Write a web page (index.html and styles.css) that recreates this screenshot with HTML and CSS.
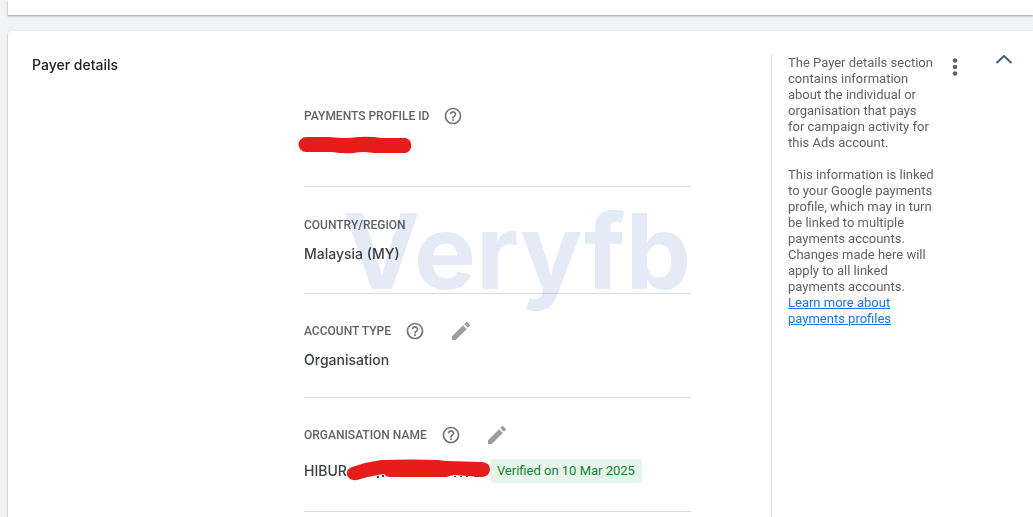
FILE: index.html
```
<!DOCTYPE html>
<html lang="en">
<head>
  <meta charset="UTF-8">
  <meta name="viewport" content="width=device-width, initial-scale=1.0">
  <title>Payer details</title>
  <link rel="stylesheet" href="styles.css">
</head>
<body>
  <svg class="defs" aria-hidden="true">
    <symbol id="help" viewBox="0 0 24 24">
      <path d="M11 18h2v-2h-2v2zm1-16C6.48 2 2 6.48 2 12s4.48 10 10 10 10-4.48 10-10S17.520 2 12 2zm0 18c-4.410 0-8-3.590-8-8s3.590-8 8-8 8 3.590 8 8-3.590 8-8 8zm0-14c-2.210 0-4 1.790-4 4h2c0-1.100.9-2 2-2s2 .9 2 2c0 2-3 1.750-3 5h2c0-2.250 3-2.500 3-5 0-2.210-1.790-4-4-4z"/>
    </symbol>
    <symbol id="pencil" viewBox="0 0 24 24">
      <path d="M3 17.250V21h3.750L17.810 9.940l-3.750-3.750L3 17.250zM20.710 7.040c.39-.39.39-1.020 0-1.410l-2.340-2.340c-.39-.39-1.020-.39-1.410 0l-1.830 1.830 3.750 3.750 1.830-1.830z"/>
    </symbol>
  </svg>

  <section class="card card-prev"></section>

  <section class="card payer">
    <h2 class="title">Payer details</h2>

    <div class="fields">
      <div class="field">
        <div class="label-row">
          <span class="label">Payments profile ID</span>
          <button type="button" class="help" aria-label="Help"><svg><use href="#help"/></svg></button>
        </div>
        <div class="value">
          <svg class="redact-id" viewBox="0 0 116 18" aria-hidden="true">
            <path d="M8 1H31Q48 3 60 1Q72 0 84 2H108A8 8 0 0 1 108 17H76Q64 15 56 17Q46 18 34 16H8A7.500 7.500 0 0 1 8 1Z"/>
          </svg>
        </div>
      </div>

      <div class="field">
        <div class="label-row">
          <span class="label">Country/region</span>
        </div>
        <div class="value">Malaysia (MY)</div>
        <div class="watermark">Veryfb</div>
      </div>

      <div class="field field-type">
        <div class="label-row">
          <span class="label">Account type</span>
          <button type="button" class="help" aria-label="Help"><svg><use href="#help"/></svg></button>
          <button type="button" class="edit" aria-label="Edit account type"><svg><use href="#pencil"/></svg></button>
        </div>
        <div class="value">Organisation</div>
      </div>

      <div class="field field-name">
        <div class="label-row">
          <span class="label">Organisation name</span>
          <button type="button" class="help" aria-label="Help"><svg><use href="#help"/></svg></button>
          <button type="button" class="edit" aria-label="Edit organisation name"><svg><use href="#pencil"/></svg></button>
        </div>
        <div class="value">
          <span>HIBUR</span>
          <svg class="redact-name" viewBox="0 0 144 24" aria-hidden="true">
            <path class="remnant" d="M32 17v2M37 16v2M109 17v1M115 17v1M121 17v1M128 17h5"/>
            <path d="M6 8Q20 3 35 1Q66 0 92 1L100 2L136 3Q144 4 144 10Q144 17 136 18L108 16Q103 17 101 18H44Q40 18 38 15Q24 17 11 21Q3 22 1 16Q0 10 6 8Z"/>
          </svg>
          <span class="badge">Verified on 10 Mar 2025</span>
        </div>
      </div>
    </div>

    <aside class="side">
      <div class="info">
        <p>The Payer details section contains information about the individual or organisation that pays for campaign activity for this Ads account.</p>
        <p>This information is linked to your Google payments profile, which may in turn be linked to multiple payments accounts. Changes made here will apply to all linked payments accounts. <a href="#">Learn more about payments profiles</a></p>
      </div>
      <button type="button" class="menu" aria-label="More options">
        <svg viewBox="0 0 24 24"><circle cx="12" cy="5.500" r="2.300"/><circle cx="12" cy="12" r="2.300"/><circle cx="12" cy="18.500" r="2.300"/></svg>
      </button>
      <button type="button" class="collapse" aria-label="Collapse">
        <svg viewBox="0 0 24 24"><path d="M4.500 8L12 1L19.500 8"/></svg>
      </button>
    </aside>
  </section>
</body>
</html>
```
FILE: styles.css
```
* {
  box-sizing: border-box;
}
body {
  margin: 0;
  padding-left: 8px;
  background: #f1f3f4;
  color: #3c4043;
  font-family: Roboto, sans-serif;
  overflow: hidden;
}
.defs {
  display: none;
}
.card {
  background: #fff;
  box-shadow: 0 1px 2px rgba(60, 64, 67, .5);
}
.card-prev {
  height: 15px;
  margin-bottom: 16px;
}
.payer {
  display: grid;
  grid-template-columns: 272px 1fr 262px;
  min-height: calc(100vh - 31px);
  padding: 24px 0 24px 24px;
  border-radius: 4px 0 0 4px;
}
.title {
  margin: 0;
  font: 500 14px/20px Inter, sans-serif;
  color: #202124;
}
.fields {
  padding: 24px 80px 24px 0;
}
.field {
  position: relative;
  padding: 26px 0 27px;
  border-bottom: 1px solid #dadce0;
}
.field:first-child {
  padding: 25px 0 29px;
}
.label-row {
  display: flex;
  align-items: center;
  height: 24px;
  margin-bottom: 5px;
}
.label {
  font-size: 12px;
  font-weight: 500;
  color: #5f6368;
  text-transform: uppercase;
}
.value {
  display: flex;
  align-items: center;
  height: 24px;
  font: 500 14px/24px Inter, sans-serif;
}
.field.field-type {
  padding: 25px 0;
}
.field.field-name {
  padding: 25px 0 28px;
}
.field-name .label-row {
  margin-bottom: 12px;
}
button {
  padding: 0;
  border: 0;
  background: none;
  cursor: pointer;
}
button svg {
  display: block;
  width: 100%;
  height: 100%;
}
.help {
  width: 20px;
  height: 20px;
  margin-left: 14px;
  fill: #757575;
}
.edit {
  width: 24px;
  height: 24px;
  margin-left: 24px;
  fill: #9e9e9e;
}
.redact-id,
.redact-name {
  flex: none;
  fill: #e71d1c;
}
.redact-id {
  width: 116px;
  height: 18px;
  margin-left: -6px;
}
.redact-name {
  width: 144px;
  height: 24px;
  margin-left: -1px;
}
.remnant {
  stroke: #3c4043;
  stroke-width: 2;
}
.badge {
  padding: 0 7px;
  border-radius: 4px;
  background: #e6f4ea;
  color: #188038;
  font: 400 13px/24px Roboto, sans-serif;
  white-space: nowrap;
}
.watermark {
  position: absolute;
  top: 1px;
  right: 0;
  color: #e4eaf6;
  font: 700 104px/126px Inter, sans-serif;
  mix-blend-mode: multiply;
  pointer-events: none;
}
.side {
  display: flex;
  align-items: flex-start;
  margin-bottom: -24px;
  padding-left: 16px;
  border-left: 1px solid #dadce0;
}
.info {
  width: 146px;
  font-size: 13px;
  line-height: 16px;
  color: #5f6368;
}
.info p {
  margin: 0 0 16px;
}
.info a {
  color: #1a73e8;
}
.menu {
  width: 24px;
  height: 24px;
  margin-left: 9px;
  fill: #5f6368;
}
.collapse {
  width: 24px;
  height: 24px;
  margin-left: 25px;
}
.collapse path {
  fill: none;
  stroke: #4a5f7d;
  stroke-width: 2;
}
```
